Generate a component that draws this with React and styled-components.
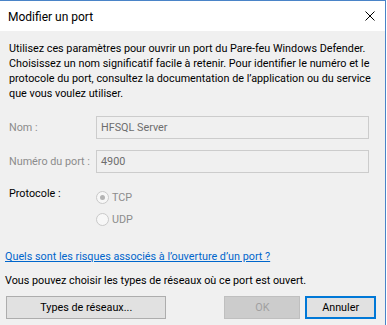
import React from "react";
import styled, { createGlobalStyle } from "styled-components";

const Global = createGlobalStyle`
  html, body { margin: 0; padding: 0; background: #ffffff; }
  body { font-family: Roboto, "Liberation Sans", sans-serif; font-size: 10.8px; color: #000; }
`;

const Window = styled.div`
  width: 385px;
  height: 324px;
  border-top: 1px solid #4a84c8;
  border-right: 1px solid #4a84c8;
  background: #f0f0f0;
  display: flex;
  flex-direction: column;
  overflow: hidden;
`;

const TitleBar = styled.div`
  height: 30px;
  background: #ffffff;
  display: flex;
  align-items: center;
  justify-content: space-between;
  padding: 0 10px 0 8px;
  flex-shrink: 0;
`;

const Title = styled.span`
  font-size: 12px;
  color: #000;
  margin-top: 1px;
`;

const Close = styled.span`
  display: flex;
  width: 10px;
  height: 10px;
  margin-top: -1px;
`;

const Body = styled.div`
  padding: 10px 9px 0 9px;
  display: flex;
  flex-direction: column;
`;

const Description = styled.p`
  margin: 0;
  line-height: 15px;
  white-space: nowrap;
`;

const Form = styled.div`
  margin-top: 15px;
  display: grid;
  grid-template-columns: 87px 273px;
  row-gap: 11px;
  align-items: center;
`;

const Label = styled.span`
  color: ${(p) => (p.$disabled ? "#8c8c8c" : "#000")};
  align-self: ${(p) => (p.$top ? "start" : "center")};
  margin-top: ${(p) => (p.$top ? "3px" : "0")};
  white-space: nowrap;
`;

const Input = styled.div`
  height: 21px;
  border: 1px solid #cccccc;
  background: #f0f0f0;
  color: #6d6d6d;
  display: flex;
  align-items: center;
  padding-left: 4px;
`;

const RadioGroup = styled.div`
  display: flex;
  flex-direction: column;
  gap: 9px;
  padding-top: 7px;
`;

const RadioRow = styled.label`
  display: flex;
  align-items: center;
  gap: 3px;
  color: #8c8c8c;
  height: 13px;
`;

const RadioCircle = styled.span`
  width: 11px;
  height: 11px;
  border-radius: 50%;
  border: 1px solid #c9c9c9;
  background: #f7f7f7;
  display: flex;
  align-items: center;
  justify-content: center;
  &::after {
    content: "";
    width: 5px;
    height: 5px;
    border-radius: 50%;
    background: ${(p) => (p.$checked ? "#b4b4b4" : "transparent")};
  }
`;

const Link = styled.a`
  margin-top: 23px;
  margin-left: -4px;
  color: #0066cc;
  text-decoration: underline;
  line-height: 15px;
`;

const Info = styled.p`
  margin: 9px 0 0 -4px;
  line-height: 15px;
`;

const ButtonBar = styled.div`
  margin-top: 8px;
  margin-left: -3px;
  display: flex;
  align-items: center;
`;

const Button = styled.button`
  font-family: inherit;
  font-size: 10.8px;
  height: 23px;
  width: ${(p) => p.$w}px;
  margin-left: ${(p) => p.$ml || 0}px;
  background: ${(p) => (p.$disabled ? "#cccccc" : "#e1e1e1")};
  color: ${(p) => (p.$disabled ? "#a0a0a0" : "#000")};
  border: ${(p) =>
    p.$primary ? "2px solid #0078d7" : p.$disabled ? "1px solid #bfbfbf" : "1px solid #adadad"};
  padding: 0;
`;

export default function App() {
  return (
    <>
      <Global />
      <Window>
        <TitleBar>
          <Title>Modifier un port</Title>
          <Close>
            <svg width="10" height="10" viewBox="0 0 10 10">
              <path d="M0.5 0.5 L9.5 9.5 M9.5 0.5 L0.5 9.5" stroke="#000" strokeWidth="1" />
            </svg>
          </Close>
        </TitleBar>
        <Body>
          <Description>
            Utilisez ces paramètres pour ouvrir un port du Pare-feu Windows Defender.
            <br />
            Choisissez un nom significatif facile à retenir. Pour identifier le numéro et le
            <br />
            protocole du port, consultez la documentation de l’application ou du service
            <br />
            que vous voulez utiliser.
          </Description>
          <Form>
            <Label $disabled>Nom :</Label>
            <Input>HFSQL Server</Input>
            <Label $disabled>Numéro du port :</Label>
            <Input>4900</Input>
            <Label $top>Protocole :</Label>
            <RadioGroup>
              <RadioRow>
                <RadioCircle $checked />
                TCP
              </RadioRow>
              <RadioRow>
                <RadioCircle />
                UDP
              </RadioRow>
            </RadioGroup>
          </Form>
          <Link>Quels sont les risques associés à l’ouverture d’un port ?</Link>
          <Info>Vous pouvez choisir les types de réseaux où ce port est ouvert.</Info>
          <ButtonBar>
            <Button $w={161}>Types de réseaux...</Button>
            <Button $w={76} $ml={58} $disabled>OK</Button>
            <Button $w={71} $ml={5} $primary>Annuler</Button>
          </ButtonBar>
        </Body>
      </Window>
    </>
  );
}
